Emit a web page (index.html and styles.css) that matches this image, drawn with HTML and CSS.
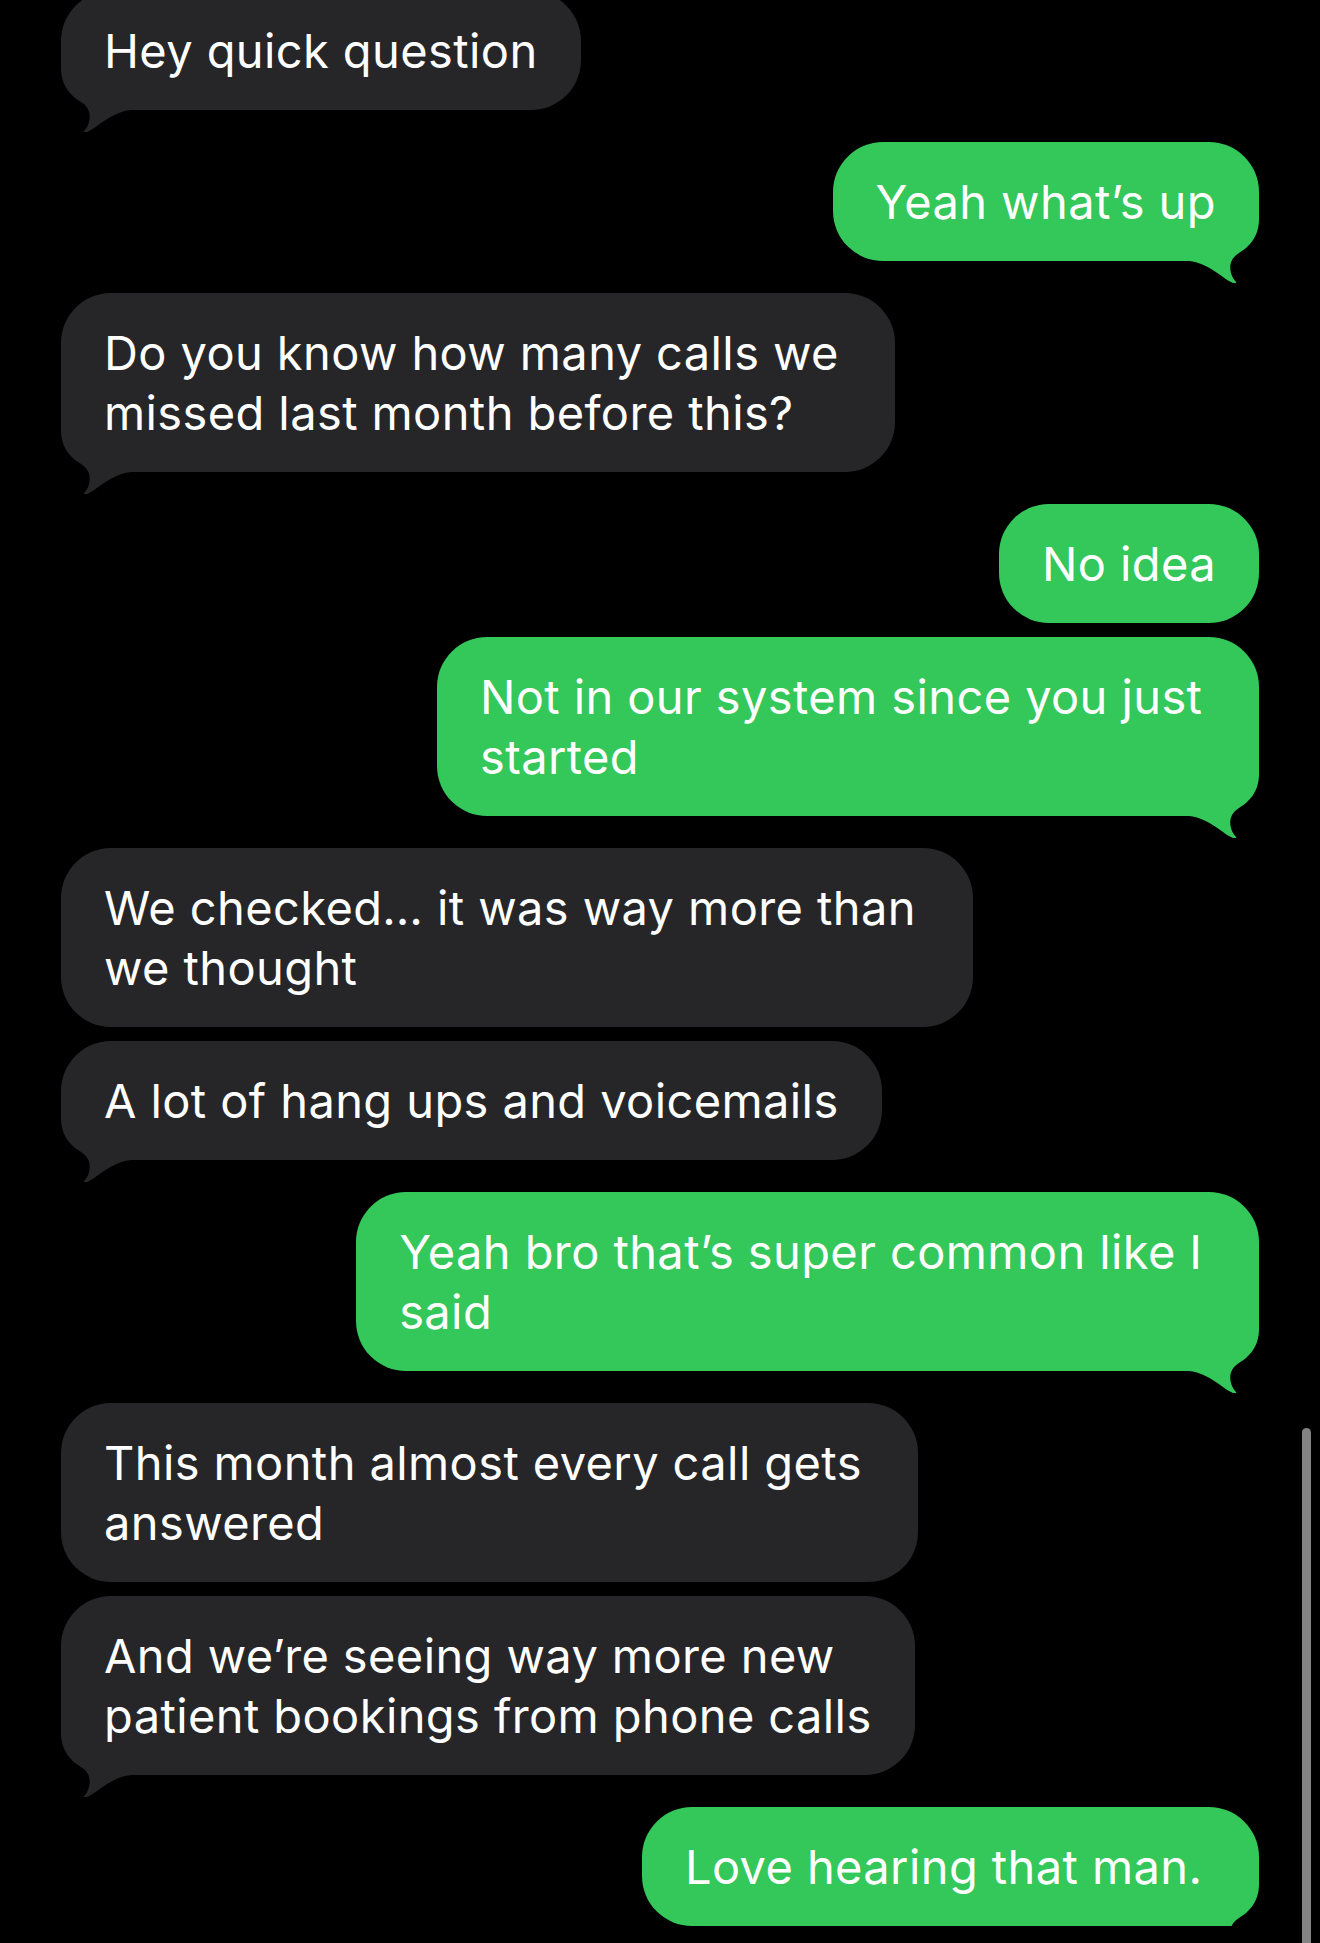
FILE: index.html
```html
<!DOCTYPE html>
<html lang="en">
<head>
  <meta charset="UTF-8" />
  <meta name="viewport" content="width=device-width, initial-scale=1.0"/>
  <title>Messages</title>
  <link rel="stylesheet" href="styles.css">
</head>
<body>
  <div class="thread">
    <div class="group in">
      <div class="bubble"><span class="text">Hey quick question</span><svg class="tail" viewBox="0 0 70 72"><path d="M70 0 L70 8 C70 26 60 36 50 42 C42 47 40 54 42 62 C43 66 45 69 47 71 C48 72 46 73 44 72 C34 68 20 52 0 50 L0 0 Z"/></svg></div>
    </div>

    <div class="group out">
      <div class="bubble"><span class="text">Yeah what’s up</span><svg class="tail" viewBox="0 0 70 72"><path d="M70 0 L70 8 C70 26 60 36 50 42 C42 47 40 54 42 62 C43 66 45 69 47 71 C48 72 46 73 44 72 C34 68 20 52 0 50 L0 0 Z"/></svg></div>
    </div>

    <div class="group in">
      <div class="bubble"><span class="text">Do you know how many calls we <br>missed last month before this?</span><svg class="tail" viewBox="0 0 70 72"><path d="M70 0 L70 8 C70 26 60 36 50 42 C42 47 40 54 42 62 C43 66 45 69 47 71 C48 72 46 73 44 72 C34 68 20 52 0 50 L0 0 Z"/></svg></div>
    </div>

    <div class="group out">
      <div class="bubble"><span class="text">No idea</span></div>
      <div class="bubble"><span class="text">Not in our system since you just <br>started</span><svg class="tail" viewBox="0 0 70 72"><path d="M70 0 L70 8 C70 26 60 36 50 42 C42 47 40 54 42 62 C43 66 45 69 47 71 C48 72 46 73 44 72 C34 68 20 52 0 50 L0 0 Z"/></svg></div>
    </div>

    <div class="group in">
      <div class="bubble"><span class="text">We checked… it was way more than <br>we thought</span></div>
      <div class="bubble"><span class="text">A lot of hang ups and voicemails</span><svg class="tail" viewBox="0 0 70 72"><path d="M70 0 L70 8 C70 26 60 36 50 42 C42 47 40 54 42 62 C43 66 45 69 47 71 C48 72 46 73 44 72 C34 68 20 52 0 50 L0 0 Z"/></svg></div>
    </div>

    <div class="group out">
      <div class="bubble"><span class="text">Yeah bro that’s super common like I <br>said</span><svg class="tail" viewBox="0 0 70 72"><path d="M70 0 L70 8 C70 26 60 36 50 42 C42 47 40 54 42 62 C43 66 45 69 47 71 C48 72 46 73 44 72 C34 68 20 52 0 50 L0 0 Z"/></svg></div>
    </div>

    <div class="group in">
      <div class="bubble"><span class="text">This month almost every call gets <br>answered</span></div>
      <div class="bubble"><span class="text">And we’re seeing way more new <br>patient bookings from phone calls</span><svg class="tail" viewBox="0 0 70 72"><path d="M70 0 L70 8 C70 26 60 36 50 42 C42 47 40 54 42 62 C43 66 45 69 47 71 C48 72 46 73 44 72 C34 68 20 52 0 50 L0 0 Z"/></svg></div>
    </div>

    <div class="group out">
      <div class="bubble"><span class="text">Love hearing that man. </span><svg class="tail" viewBox="0 0 70 72"><path d="M70 0 L70 8 C70 26 60 36 50 42 C42 47 40 54 42 62 C43 66 45 69 47 71 C48 72 46 73 44 72 C34 68 20 52 0 50 L0 0 Z"/></svg></div>
    </div>
  </div>

  <div class="scrollbar"></div>
</body>
</html>
```

FILE: styles.css
```css
html, body {
  margin: 0;
  background: #000;
  overflow: hidden;
}
body {
  font-family: Inter, "Noto Sans", sans-serif;
  color: #fff;
}
.thread {
  display: flex;
  flex-direction: column;
  gap: 32px;
  padding: 0 61px;
  margin-top: -9px;
}
.group {
  display: flex;
  flex-direction: column;
  gap: 14px;
}
.group.in {
  align-items: flex-start;
}
.group.out {
  align-items: flex-end;
}
.bubble {
  position: relative;
  font-size: 47px;
  letter-spacing: 0.4px;
  line-height: 60px;
  padding: 29.5px 43px;
  border-radius: 50px;
  white-space: pre;
}
.text {
  position: relative;
  z-index: 1;
}
.in .bubble {
  background: #262629;
}
.out .bubble {
  background: #34c759;
}
.tail {
  position: absolute;
  bottom: -22px;
  width: 70px;
  height: 72px;
}
.out .tail {
  right: 0;
  fill: #34c759;
}
.in .tail {
  left: 0;
  transform: scaleX(-1);
  fill: #262629;
}
.scrollbar {
  position: fixed;
  right: 9px;
  top: 1428px;
  bottom: -10px;
  width: 9px;
  border-radius: 5px;
  background: #838383;
}
```
